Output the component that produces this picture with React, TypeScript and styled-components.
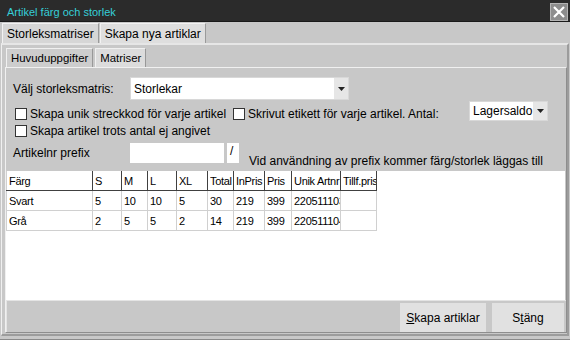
import React from 'react'
import styled, { createGlobalStyle } from 'styled-components'

const GlobalStyle = createGlobalStyle`
  html, body {
    margin: 0;
    padding: 0;
    background: #c8c8c8;
  }
  body {
    font-family: "Liberation Sans", Arial, sans-serif;
    font-size: 12px;
    color: #000;
  }
`

type Row = { color: string; s: string; m: string; l: string; xl: string; total: string; inPris: string; pris: string; artnr: string; tillf: string }

const columns = [
  { key: 'color', label: 'Färg', width: 86 },
  { key: 's', label: 'S', width: 29 },
  { key: 'm', label: 'M', width: 26 },
  { key: 'l', label: 'L', width: 29 },
  { key: 'xl', label: 'XL', width: 31 },
  { key: 'total', label: 'Total', width: 26 },
  { key: 'inPris', label: 'InPris', width: 31 },
  { key: 'pris', label: 'Pris', width: 27 },
  { key: 'artnr', label: 'Unik Artnr', width: 49 },
  { key: 'tillf', label: 'Tillf.pris', width: 36 },
] as const

const tableWidth = columns.reduce((sum, c) => sum + c.width, 0)

const rows: Row[] = [
  { color: 'Svart', s: '5', m: '10', l: '10', xl: '5', total: '30', inPris: '219', pris: '399', artnr: '2205111036', tillf: '' },
  { color: 'Grå', s: '2', m: '5', l: '5', xl: '2', total: '14', inPris: '219', pris: '399', artnr: '2205111048', tillf: '' },
]

function Arrow() {
  return (
    <svg width="7" height="4" viewBox="0 0 7 4">
      <path d="M0 0 H7 L3.5 4 Z" fill="#222" />
    </svg>
  )
}

export default function App() {
  return (
    <>
      <GlobalStyle />
      <Window>
        <TitleBar>
          <Title>Artikel färg och storlek</Title>
          <CloseButton>
            <svg width="14" height="12" viewBox="0 0 14 12">
              <path d="M2 1 L12 11 M12 1 L2 11" stroke="#fff" strokeWidth="2.2" />
            </svg>
          </CloseButton>
        </TitleBar>

        <TopTabs>
          <TopTab $active>Storleksmatriser</TopTab>
          <TopTab>Skapa nya artiklar</TopTab>
        </TopTabs>

        <OuterPanel>
          <InnerTabs>
            <InnerTab $active>Huvuduppgifter</InnerTab>
            <InnerTab>Matriser</InnerTab>
          </InnerTabs>

          <InnerPanel>
            <Form>
              <FormRow>
                <Label>Välj storleksmatris:</Label>
                <Combo $width={219} $height={23}>
                  <ComboText>Storlekar</ComboText>
                  <ComboButton>
                    <Arrow />
                  </ComboButton>
                </Combo>
              </FormRow>

              <OptionsBlock>
                <Checks>
                  <CheckRow>
                    <Check $width={218}>
                      <Box />
                      <span>Skapa unik streckkod för varje artikel</span>
                    </Check>
                    <Check>
                      <Box />
                      <span>Skrivut etikett för varje artikel. Antal:</span>
                    </Check>
                  </CheckRow>
                  <CheckRow>
                    <Check>
                      <Box />
                      <span>Skapa artikel trots antal ej angivet</span>
                    </Check>
                  </CheckRow>
                </Checks>
                <Combo $width={79} $height={20}>
                  <ComboText>Lagersaldo</ComboText>
                  <ComboButton>
                    <Arrow />
                  </ComboButton>
                </Combo>
              </OptionsBlock>

              <PrefixRow>
                <Label>Artikelnr prefix</Label>
                <TextInput $width={94} />
                <SlashBox>/</SlashBox>
                <Hint>Vid användning av prefix kommer färg/storlek läggas till</Hint>
              </PrefixRow>
            </Form>

            <GridArea>
              <Table style={{ width: tableWidth }}>
                <colgroup>
                  {columns.map((c) => (
                    <col key={c.key} style={{ width: c.width }} />
                  ))}
                </colgroup>
                <thead>
                  <tr>
                    {columns.map((c) => (
                      <HeadCell key={c.key}>
                        <CellText>{c.label}</CellText>
                      </HeadCell>
                    ))}
                  </tr>
                </thead>
                <tbody>
                  {rows.map((r) => (
                    <tr key={r.color}>
                      {columns.map((c) => (
                        <Cell key={c.key}>
                          <CellText>{r[c.key]}</CellText>
                        </Cell>
                      ))}
                    </tr>
                  ))}
                </tbody>
              </Table>
            </GridArea>

            <Footer>
              <Button $width={86}>
                <u>S</u>kapa artiklar
              </Button>
              <Button $width={72}>
                S<u>t</u>äng
              </Button>
            </Footer>
          </InnerPanel>
        </OuterPanel>
      </Window>
    </>
  )
}

const Window = styled.div`
  width: 570px;
  height: 340px;
  display: flex;
  flex-direction: column;
  background: #c8c8c8;
  overflow: hidden;
  border-bottom: 1px solid #8a8a8a;
  box-sizing: border-box;
`

const TitleBar = styled.div`
  height: 22px;
  flex: none;
  display: flex;
  align-items: center;
  justify-content: space-between;
  background: #2b2b2b;
  border-bottom: 1px solid #1a1a1a;
  box-sizing: border-box;
  padding: 0 2px 0 7px;
`

const Title = styled.span`
  color: #36cfd8;
  font-size: 11px;
  margin-top: 3px;
`

const CloseButton = styled.div`
  width: 18px;
  height: 18px;
  margin-top: 3px;
  display: flex;
  align-items: center;
  justify-content: center;
  background: #8d8d8d;
  border: 1px solid #b4b4b4;
  box-sizing: border-box;
`

const TopTabs = styled.div`
  height: 21px;
  flex: none;
  display: flex;
  align-items: flex-end;
  padding-left: 2px;
  gap: 1px;
`

const TopTab = styled.div<{ $active?: boolean }>`
  height: 20px;
  padding: 0 4px;
  display: flex;
  align-items: center;
  font-size: 12px;
  background: ${(p) => (p.$active ? '#d6d6d6' : '#dedede')};
  border: 1px solid #f2f2f2;
  border-right-color: #9a9a9a;
  border-bottom: none;
  box-sizing: border-box;
`

const OuterPanel = styled.div`
  flex: 1;
  display: flex;
  flex-direction: column;
  border-top: 2px solid #e6e6e6;
  border-left: 1px solid #f0f0f0;
  border-right: 2px solid #9c9c9c;
  border-bottom: 2px solid #9c9c9c;
  margin: 0 1px 3px 1px;
  padding: 3px 0 1px 3px;
  box-sizing: border-box;
`

const InnerTabs = styled.div`
  height: 19px;
  flex: none;
  display: flex;
  gap: 2px;
  padding-left: 1px;
`

const InnerTab = styled.div<{ $active?: boolean }>`
  height: 19px;
  padding: 0 4px;
  display: flex;
  align-items: center;
  font-size: 11.4px;
  background: ${(p) => (p.$active ? '#cdcdcd' : '#dcdcdc')};
  border: 1px solid #f0f0f0;
  border-right-color: #989898;
  border-bottom: none;
  box-sizing: border-box;
`

const InnerPanel = styled.div`
  flex: 1;
  display: flex;
  flex-direction: column;
  border: 1px solid #f0f0f0;
  border-right-color: #8e8e8e;
  border-bottom-color: #8e8e8e;
  box-sizing: border-box;
`

const Form = styled.div`
  flex: none;
  padding: 9px 0 0 7px;
  display: flex;
  flex-direction: column;
`

const FormRow = styled.div`
  display: flex;
  align-items: center;
`

const Label = styled.div`
  width: 117px;
  flex: none;
`

const Combo = styled.div<{ $width: number; $height: number }>`
  width: ${(p) => p.$width}px;
  height: ${(p) => p.$height}px;
  display: flex;
  background: #fff;
  border: 1px solid #d8d8d8;
  box-sizing: border-box;
`

const ComboText = styled.div`
  flex: 1;
  display: flex;
  align-items: center;
  padding-left: 3px;
  white-space: nowrap;
  overflow: hidden;
`

const ComboButton = styled.div`
  width: 14px;
  flex: none;
  display: flex;
  align-items: center;
  justify-content: center;
  background: #e6e6e6;
`

const OptionsBlock = styled.div`
  display: flex;
  align-items: flex-start;
  margin-top: 1px;
`

const Checks = styled.div`
  width: 456px;
  flex: none;
  display: flex;
  flex-direction: column;
  gap: 5px;
  padding: 7px 0 0 2px;
  box-sizing: border-box;
`

const CheckRow = styled.div`
  display: flex;
  align-items: center;
  height: 12px;
`

const Check = styled.label<{ $width?: number }>`
  display: flex;
  align-items: center;
  gap: 3px;
  white-space: nowrap;
  ${(p) => (p.$width ? `width: ${p.$width}px;` : '')}
`

const Box = styled.span`
  width: 12px;
  height: 12px;
  flex: none;
  background: #fff;
  border: 1px solid #333;
  box-sizing: border-box;
`

const PrefixRow = styled.div`
  display: flex;
  align-items: center;
  margin-top: 6px;
  height: 20px;
`

const TextInput = styled.div<{ $width: number }>`
  width: ${(p) => p.$width}px;
  height: 20px;
  background: #fff;
`

const SlashBox = styled.div`
  width: 12px;
  height: 20px;
  margin-left: 3px;
  background: #fff;
  padding: 2px 0 0 3px;
  box-sizing: border-box;
  line-height: 12px;
`

const Hint = styled.div`
  margin-left: 10px;
  align-self: flex-end;
  margin-bottom: -5px;
  white-space: nowrap;
`

const GridArea = styled.div`
  flex: 1;
  margin: 8px 1px 0 0;
  background: #fff;
  overflow: hidden;
`

const Table = styled.table`
  border-collapse: collapse;
  table-layout: fixed;
  font-size: 11px;
  letter-spacing: -0.3px;
`

const HeadCell = styled.th`
  height: 19px;
  padding: 0 0 0 2px;
  font-weight: normal;
  text-align: left;
  background: #fff;
  border-right: 1px solid #404040;
  border-bottom: 1px solid #404040;
  border-left: 1px solid #d0d0d0;
  overflow: hidden;
`

const Cell = styled.td`
  height: 19px;
  padding: 0 0 0 2px;
  border: 1px solid #d0d0d0;
  border-top: none;
  overflow: hidden;
`

const CellText = styled.div`
  white-space: nowrap;
  overflow: hidden;
`

const Footer = styled.div`
  height: 32px;
  flex: none;
  display: flex;
  justify-content: flex-end;
  align-items: flex-end;
  gap: 6px;
  padding-right: 2px;
  border-top: 1px solid #e4e4e4;
  border-left: 1px solid #e4e4e4;
  box-sizing: border-box;
`

const Button = styled.div<{ $width: number }>`
  width: ${(p) => p.$width}px;
  height: 29px;
  display: flex;
  align-items: center;
  justify-content: center;
  background: #e1e1e1;
  white-space: nowrap;
`
